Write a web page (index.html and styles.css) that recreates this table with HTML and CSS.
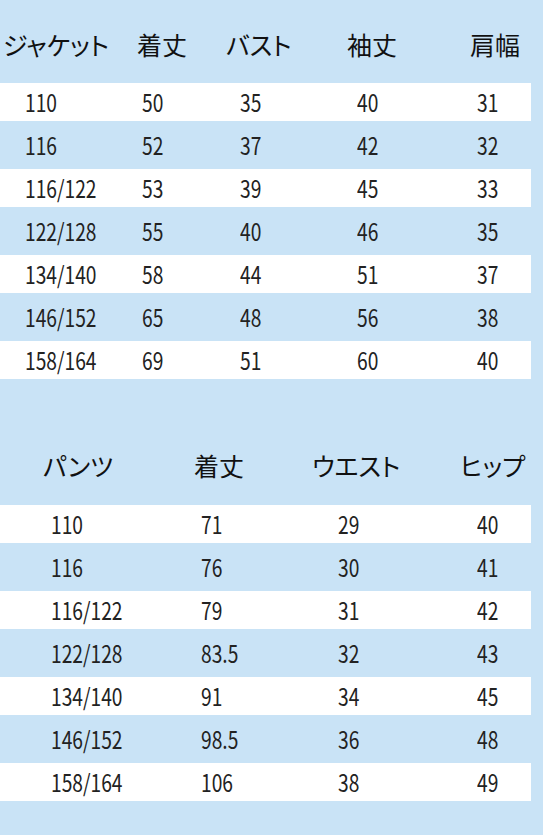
FILE: index.html
```html
<!DOCTYPE html>
<html lang="ja">
<head>
<meta charset="utf-8">
<title>サイズ表</title>
<link rel="stylesheet" href="styles.css">
</head>
<body>
<div class="page">
  <section class="table jacket">
    <div class="head">
      <span class="h">ジャケット</span>
      <span class="h">着丈</span>
      <span class="h">バスト</span>
      <span class="h">袖丈</span>
      <span class="h">肩幅</span>
    </div>
    <div class="row white"><span class="c"><i>110</i></span><span class="c"><i>50</i></span><span class="c"><i>35</i></span><span class="c"><i>40</i></span><span class="c"><i>31</i></span></div>
    <div class="row"><span class="c"><i>116</i></span><span class="c"><i>52</i></span><span class="c"><i>37</i></span><span class="c"><i>42</i></span><span class="c"><i>32</i></span></div>
    <div class="row white"><span class="c"><i>116/122</i></span><span class="c"><i>53</i></span><span class="c"><i>39</i></span><span class="c"><i>45</i></span><span class="c"><i>33</i></span></div>
    <div class="row"><span class="c"><i>122/128</i></span><span class="c"><i>55</i></span><span class="c"><i>40</i></span><span class="c"><i>46</i></span><span class="c"><i>35</i></span></div>
    <div class="row white"><span class="c"><i>134/140</i></span><span class="c"><i>58</i></span><span class="c"><i>44</i></span><span class="c"><i>51</i></span><span class="c"><i>37</i></span></div>
    <div class="row"><span class="c"><i>146/152</i></span><span class="c"><i>65</i></span><span class="c"><i>48</i></span><span class="c"><i>56</i></span><span class="c"><i>38</i></span></div>
    <div class="row white"><span class="c"><i>158/164</i></span><span class="c"><i>69</i></span><span class="c"><i>51</i></span><span class="c"><i>60</i></span><span class="c"><i>40</i></span></div>
  </section>
  <section class="table pants">
    <div class="head">
      <span class="h">パンツ</span>
      <span class="h">着丈</span>
      <span class="h">ウエスト</span>
      <span class="h">ヒップ</span>
    </div>
    <div class="row white"><span class="c"><i>110</i></span><span class="c"><i>71</i></span><span class="c"><i>29</i></span><span class="c"><i>40</i></span></div>
    <div class="row"><span class="c"><i>116</i></span><span class="c"><i>76</i></span><span class="c"><i>30</i></span><span class="c"><i>41</i></span></div>
    <div class="row white"><span class="c"><i>116/122</i></span><span class="c"><i>79</i></span><span class="c"><i>31</i></span><span class="c"><i>42</i></span></div>
    <div class="row"><span class="c"><i>122/128</i></span><span class="c"><i>83.5</i></span><span class="c"><i>32</i></span><span class="c"><i>43</i></span></div>
    <div class="row white"><span class="c"><i>134/140</i></span><span class="c"><i>91</i></span><span class="c"><i>34</i></span><span class="c"><i>45</i></span></div>
    <div class="row"><span class="c"><i>146/152</i></span><span class="c"><i>98.5</i></span><span class="c"><i>36</i></span><span class="c"><i>48</i></span></div>
    <div class="row white"><span class="c"><i>158/164</i></span><span class="c"><i>106</i></span><span class="c"><i>38</i></span><span class="c"><i>49</i></span></div>
  </section>
</div>
</body>
</html>
```
FILE: styles.css
```css
html, body {
  margin: 0;
  padding: 0;
  background: #c9e3f6;
}
.page {
  width: 543px;
  height: 835px;
  overflow: hidden;
  background: #c9e3f6;
  font-family: "Noto Sans CJK JP", "Noto Sans", sans-serif;
  color: #1a1a1a;
}
.head {
  display: grid;
  align-items: center;
  font-size: 25px;
  color: #111;
  line-height: 1;
  font-feature-settings: "palt" 1;
}
.jacket .head {
  height: 80px;
  padding-top: 8px;
  box-sizing: border-box;
  grid-template-columns: 134px 89px 121px 123px 1fr;
  padding-left: 3px;
}
.pants .head {
  height: 121px;
  padding-top: 48px;
  box-sizing: border-box;
  grid-template-columns: 151px 118px 148px 1fr;
  padding-left: 43px;
}
.row {
  display: grid;
  align-items: center;
  height: 43px;
  box-sizing: border-box;
  font-size: 24px;
  line-height: 1;
}
.row.white {
  background: #fff;
  background-clip: content-box;
  padding: 3px 0 2px 0;
  margin-right: 12px;
}
.jacket .row {
  grid-template-columns: 117px 98px 117px 120px 1fr;
  padding-left: 25px;
}
.jacket .row.white {
  padding-left: 0;
  grid-template-columns: 142px 98px 117px 120px 1fr;
}
.jacket .row.white .c:first-child { padding-left: 25px; }
.pants .row {
  grid-template-columns: 150px 137px 139px 1fr;
  padding-left: 51px;
}
.pants .row.white {
  padding-left: 0;
  grid-template-columns: 201px 137px 139px 1fr;
}
.pants .row.white .c:first-child { padding-left: 51px; }
.c i {
  display: inline-block;
  font-style: normal;
  transform: scaleX(0.8);
  transform-origin: left center;
  color: #222;
}
```
